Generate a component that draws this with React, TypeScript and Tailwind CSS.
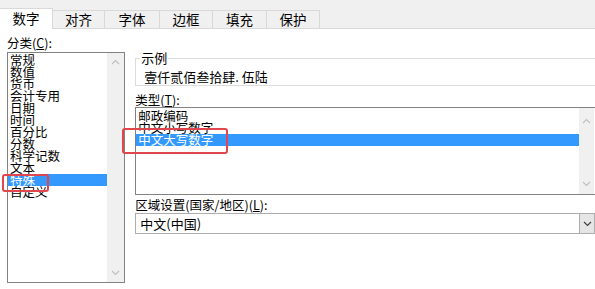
import React from "react";

const font = { fontFamily: '"Noto Sans CJK SC", "Noto Sans", sans-serif' };

function Chevron({ dir, color = "#a0a0a0" }: { dir: "up" | "down"; color?: string }) {
  return (
    <svg width="9" height="6" viewBox="0 0 9 6">
      <path
        d={dir === "up" ? "M1 5 L4.5 1.5 L8 5" : "M1 1 L4.5 4.5 L8 1"}
        fill="none"
        stroke={color}
        strokeWidth="1.2"
      />
    </svg>
  );
}

const categories = ["常规", "数值", "货币", "会计专用", "日期", "时间", "百分比", "分数", "科学记数", "文本", "特殊", "自定义"];
const types = ["邮政编码", "中文小写数字", "中文大写数字"];

export default function App() {
  const tabs = ["对齐", "字体", "边框", "填充", "保护"];
  const tabWidths = ["w-[52px]", "w-[55px]", "w-[53px]", "w-[54px]", "w-[53px]"];
  return (
    <div className="relative w-[595px] h-[289px] bg-white overflow-hidden text-black" style={font}>
      {/* Tab bar */}
      <div className="flex items-end h-[29px] bg-[#f0f0f0]">
        <div className="w-[53px] h-[21px] bg-white border-t border-r border-[#d9d9d9] flex items-center justify-center text-[13.5px] leading-none">
          数字
        </div>
        {tabs.map((t, i) => (
          <div
            key={t}
            className={`${tabWidths[i]} h-[19px] bg-[#f0f0f0] border-t border-r border-b border-[#d9d9d9] flex items-center justify-center text-[13.5px] leading-none`}
          >
            {t}
          </div>
        ))}
        <div className="flex-1 h-px bg-[#d9d9d9]" />
      </div>

      {/* Content */}
      <div className="flex pl-[7px]">
        {/* Left column */}
        <div className="w-[121px] flex flex-col">
          <div className="h-[23px] pt-[7px] text-[12.5px] leading-[14px]">
            分类(<u>C</u>):
          </div>
          <div className="h-[231px] border border-[#828282] flex">
            <div className="flex-1 flex flex-col pt-px text-[12.5px]">
              {categories.map((c) => (
                <div
                  key={c}
                  className={`h-[12px] leading-[12px] pl-[2px] whitespace-nowrap ${c === "特殊" ? "bg-[#3399ff] text-white" : ""}`}
                >
                  {c}
                </div>
              ))}
            </div>
            <div className="w-[17px] bg-[#f0f0f0] flex flex-col items-center justify-between py-[6px]">
              <Chevron dir="up" color="#c0c0c0" />
              <Chevron dir="down" color="#c0c0c0" />
            </div>
          </div>
        </div>

        {/* Right column */}
        <div className="ml-[10px] w-[470px] flex flex-col">
          <div className="relative mt-[29px] h-[28px] border-t border-l border-b border-[#dcdcdc] pl-[8px] pt-[11px] text-[13px] leading-[14px]">
            <span className="absolute left-[4px] -top-[8px] bg-white px-px text-[13px] leading-[14px]">示例</span>
            壹仟贰佰叁拾肆. 伍陆
          </div>
          <div className="h-[21px] pt-[7px] text-[12.5px] leading-[14px]">
            类型(<u>T</u>):
          </div>
          <div className="h-[88px] border-t border-l border-b border-[#828282] flex">
            <div className="flex-1 flex flex-col pt-[2px] text-[12.5px]">
              {types.map((t) => (
                <div
                  key={t}
                  className={`h-[12px] leading-[12px] pl-[2px] whitespace-nowrap ${t === "中文大写数字" ? "bg-[#3399ff] text-white" : ""}`}
                >
                  {t}
                </div>
              ))}
            </div>
            <div className="w-[15px] mr-[1px] bg-[#f0f0f0] flex flex-col items-center justify-between pt-[10px] pb-[7px]">
              <Chevron dir="up" color="#c0c0c0" />
              <Chevron dir="down" color="#c0c0c0" />
            </div>
          </div>
          <div className="h-[18px] pt-[3px] text-[12.5px] leading-[14px] whitespace-nowrap">
            区域设置(国家/地区)(<u>L</u>):
          </div>
          <div className="h-[21px] border border-[#adadad] flex items-center">
            <div className="flex-1 pl-[4px] text-[13px] leading-[14px]">中文(中国)</div>
            <div className="w-[15px] h-full bg-[#e5e5e5] border-l border-[#adadad] flex items-center justify-center">
              <Chevron dir="down" color="#404040" />
            </div>
          </div>
        </div>
      </div>

      {/* Red annotation boxes */}
      <div className="absolute left-[2px] top-[174px] w-[47px] h-[18px] border-2 border-[#e0464e] rounded-[3px]" />
      <div className="absolute left-[122px] top-[128px] w-[106px] h-[26px] border-2 border-[#e0464e] rounded-[3px]" />
    </div>
  );
}
